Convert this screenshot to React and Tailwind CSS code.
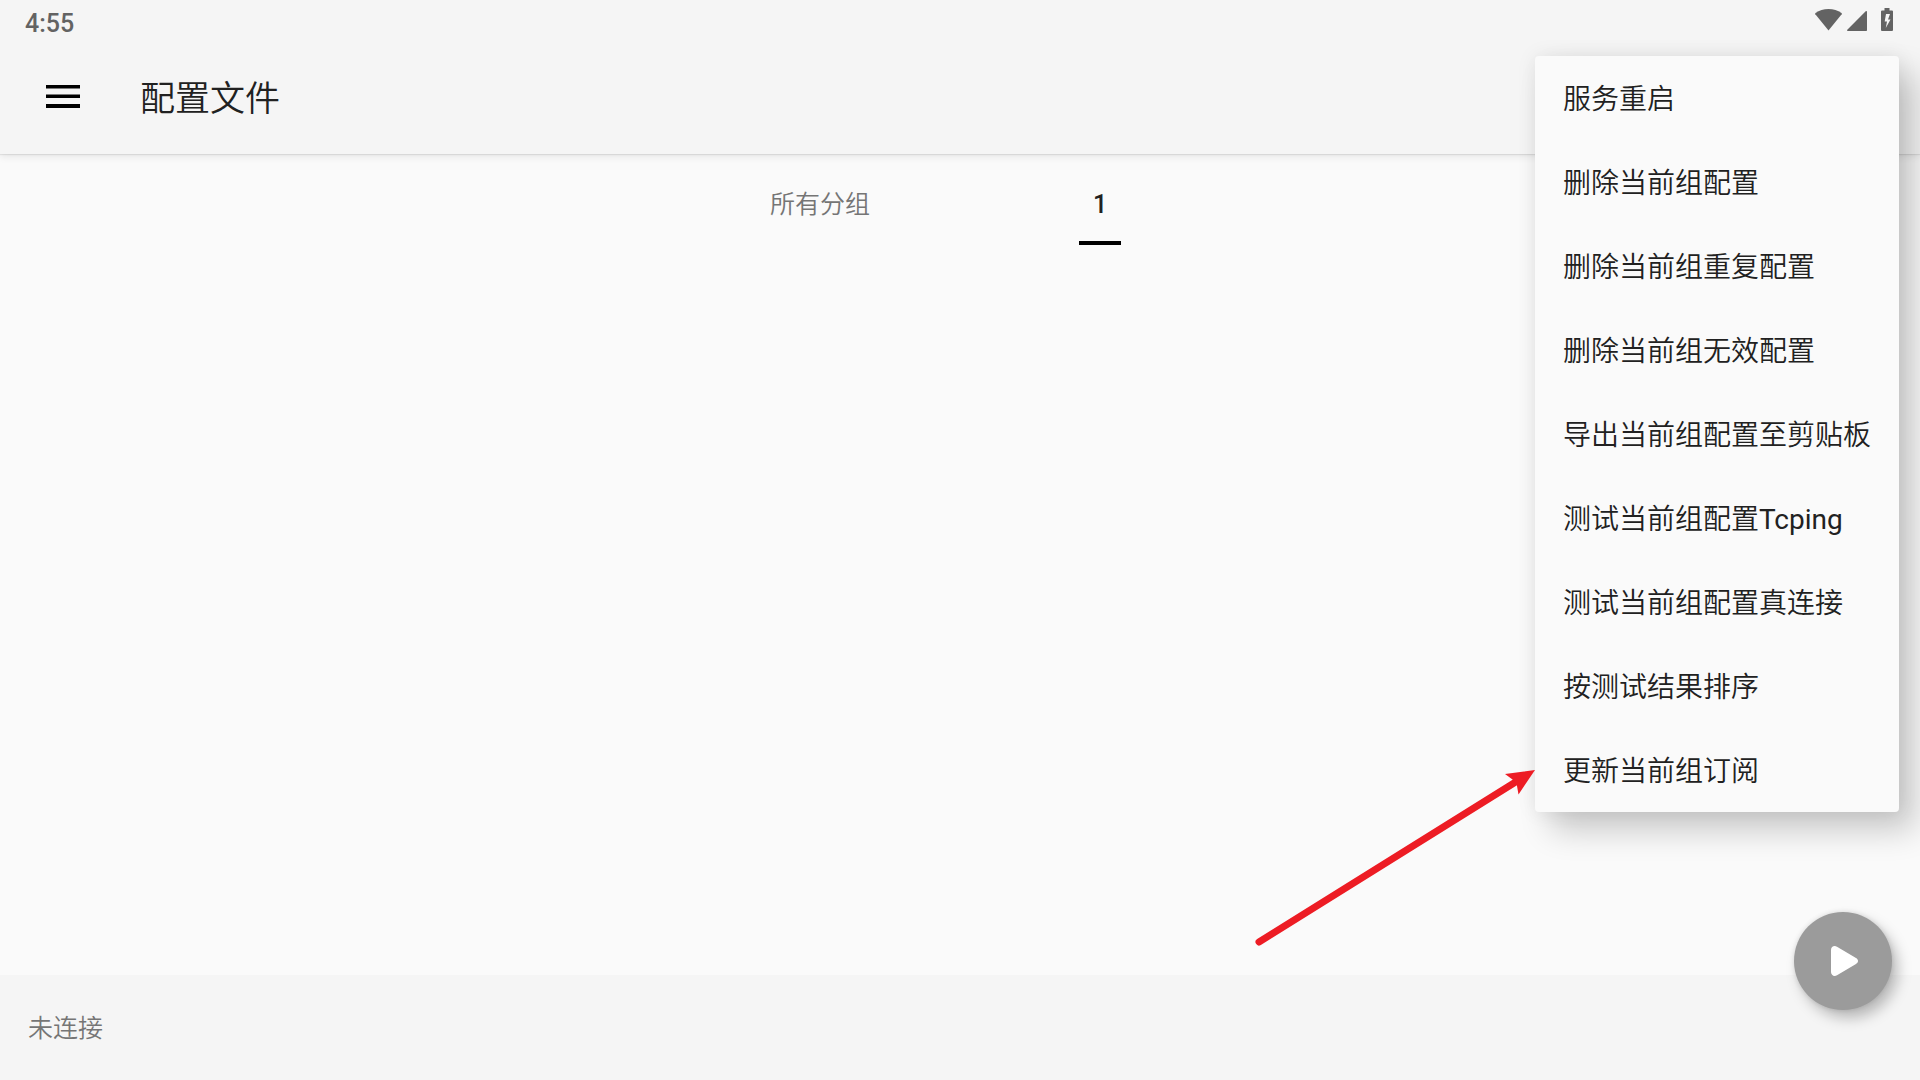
import React, { useState } from "react";

const menuItems = [
  { label: "服务重启" },
  { label: "删除当前组配置" },
  { label: "删除当前组重复配置" },
  { label: "删除当前组无效配置" },
  { label: "导出当前组配置至剪贴板" },
  { label: "测试当前组配置", suffix: "Tcping" },
  { label: "测试当前组配置真连接" },
  { label: "按测试结果排序" },
  { label: "更新当前组订阅" },
];

const groups = ["所有分组", "1"];

const StatusBar = () => (
  <div className="flex h-[42px] items-center justify-between pl-[25px] pr-[27px] pb-1 text-[#636363]">
    <span className="pt-[10px] text-[25px] leading-8 font-medium">4:55</span>
    <div className="flex items-end">
      <svg width="27" height="22" viewBox="0 0 27 22" fill="currentColor" className="mr-[5px]">
        <path d="M13.5 21.5 0.3 5.2C0 4.700 0.100 4.300 0.500 4 4.200 1.400 8.700 0 13.500 0s9.300 1.400 13 4c.4.3.5.7.200 1.200Z" />
      </svg>
      <svg width="20" height="20" viewBox="0 0 20 20" fill="currentColor" className="mr-[14px]">
        <path d="M20 .8v18.400a.8.8 0 0 1-.8.8H.8c-.8 0-1-.8-.5-1.300L18.700.3c.5-.5 1.300-.2 1.300.5Z" />
      </svg>
      <svg width="12" height="23" viewBox="0 0 12 23" fill="currentColor">
        <path
          fillRule="evenodd"
          d="M3.500 0h5v2.500H11a1 1 0 0 1 1 1V22a1 1 0 0 1-1 1H1a1 1 0 0 1-1-1V3.500a1 1 0 0 1 1-1h2.500ZM5 6l-1.300 7.500H6L4.800 20l4.700-8.500H7L9 6Z"
        />
      </svg>
    </div>
  </div>
);

const Menu = () => (
  <div className="absolute right-[21px] top-14">
    <div
      role="menu"
      className="flex flex-col rounded-[4px] bg-[#fafafa] shadow-[16px_18px_32px_rgba(0,0,0,0.2),0_0_20px_rgba(0,0,0,0.08)]"
    >
      {menuItems.map(({ label, suffix }) => (
        <button
          key={label + (suffix || "")}
          role="menuitem"
          className="h-[84px] px-7 pt-1 text-left text-[28px] font-[350] text-[#212121] whitespace-nowrap"
        >
          {label}
          {suffix && <span className="font-normal">{suffix}</span>}
        </button>
      ))}
    </div>
    {/* arrow pointing at the last entry */}
    <svg
      width="280"
      height="180"
      viewBox="0 0 280 180"
      className="absolute right-full bottom-[-134px]"
    >
      <path d="M4 176 259 17" stroke="#ed1c24" strokeWidth="7" strokeLinecap="round" />
      <path d="M280 4 250 8l7.500 5.500L262 20l1.500 8.500Z" fill="#ed1c24" />
    </svg>
  </div>
);

const App = () => {
  const [activeGroup, setActiveGroup] = useState("1");

  return (
    <div className="relative flex min-h-screen flex-col bg-[#fafafa] font-[Roboto,'Noto_Sans_CJK_SC',sans-serif]">
      <header className="bg-[#f5f5f5] shadow-[0_1px_1px_rgba(0,0,0,0.08),0_3px_7px_rgba(0,0,0,0.08)]">
        <StatusBar />
        <div className="flex h-28 items-center pl-[46px] pb-1">
          <button aria-label="菜单">
            <svg width="34" height="23" viewBox="0 0 34 23" className="block">
              <path d="M0 0h34v3.500H0zM0 9.500h34v3.500H0zM0 19h34v4H0z" />
            </svg>
          </button>
          <h1 className="pt-2 pl-[60px] text-[35px] font-[350] text-[#212121]">配置文件</h1>
        </div>
      </header>

      <main className="flex-1 pt-[7px]">
        <div role="tablist" className="flex justify-center">
          {groups.map((group) => (
            <button
              key={group}
              role="tab"
              aria-selected={group === activeGroup}
              onClick={() => setActiveGroup(group)}
              className="flex h-[84px] w-[280px] flex-col items-center"
            >
              <span
                className={`flex h-20 items-center pt-2 text-[25px] ${
                  group === activeGroup ? "font-medium text-[#212121]" : "font-[350] text-[#757575]"
                }`}
              >
                {group}
              </span>
              {group === activeGroup && <span className="h-1 w-[42px] bg-black" />}
            </button>
          ))}
        </div>
      </main>

      <footer className="flex h-[105px] items-center bg-[#f5f5f5] px-7 pt-[2px] text-[25px] font-[350] text-[#757575]">
        未连接
      </footer>

      <button
        aria-label="连接"
        className="absolute right-7 bottom-[70px] flex size-[98px] items-center justify-center rounded-full bg-[#9b9b9b] pl-[2px] shadow-[6px_8px_14px_rgba(0,0,0,0.25),0_0_5px_rgba(0,0,0,0.12)]"
      >
        <svg width="27" height="30" viewBox="0 0 27 30" fill="white">
          <path d="M0 4C0 .8 3.200-1 6 .8L25 12c2.700 1.600 2.700 4.400 0 6L6 29.200C3.200 31 0 29.200 0 26Z" />
        </svg>
      </button>

      <Menu />
    </div>
  );
};

export default App;
